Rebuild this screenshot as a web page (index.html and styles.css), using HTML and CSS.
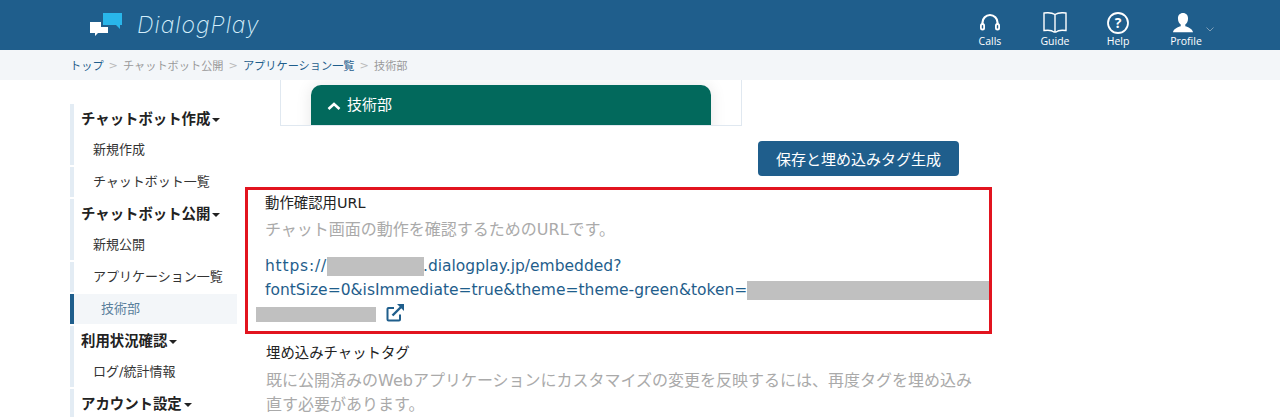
FILE: index.html
```html
<!DOCTYPE html>
<html lang="ja">
<head>
    <meta charset="UTF-8">
    <meta name="viewport" content="width=device-width, initial-scale=1.0">
    <title>DialogPlay</title>
    <link rel="stylesheet" href="styles.css">
</head>
<body>
    <header class="top-bar">
        <a class="logo">
            <svg class="logo-mark" width="32" height="23" viewBox="0 0 32 23">
                <path fill="#29b6ea" d="M13 0h19v12h-2v4l-4-4H13z"/>
                <path fill="#fff" d="M0 9h11v5h7v6H8l-3 3v-3H0z"/>
            </svg>
            <span class="logo-text">DialogPlay</span>
        </a>
        <nav class="top-nav">
            <a class="top-nav-item calls">
                <svg width="24" height="22" viewBox="0 0 24 22" fill="none">
                    <path d="M4.500 14V10.500a7.500 7.500 0 0 1 15 0V14" stroke="#fff" stroke-width="2.200"/>
                    <rect x="2" y="11" width="5" height="7.500" rx="2.500" fill="#fff"/>
                    <rect x="17" y="11" width="5" height="7.500" rx="2.500" fill="#fff"/>
                    <rect x="3.800" y="13" width="1.400" height="3.600" rx="0.700" fill="#1f5e8c"/>
                    <rect x="18.800" y="13" width="1.400" height="3.600" rx="0.700" fill="#1f5e8c"/>
                </svg>
                <span>Calls</span>
            </a>
            <a class="top-nav-item guide">
                <svg width="24" height="22" viewBox="0 0 24 22" fill="none" stroke="#fff" stroke-width="1.400">
                    <path d="M1 1c4-.6 8-.4 11 1.500 3-1.900 7-2.100 11-1.500v17.500c-4-.6-8-.3-10 1.500h-2c-2-1.800-6-2.100-10-1.500z"/>
                    <path d="M12 2.500V20"/>
                </svg>
                <span>Guide</span>
            </a>
            <a class="top-nav-item help">
                <svg width="24" height="22" viewBox="0 0 24 22" fill="none">
                    <circle cx="12" cy="11" r="10" stroke="#fff" stroke-width="1.800"/>
                    <text x="12" y="16" text-anchor="middle" class="help-mark">?</text>
                </svg>
                <span>Help</span>
            </a>
            <a class="top-nav-item profile">
                <svg class="profile-icon" width="22" height="22" viewBox="0 0 24 22">
                    <path fill="#fff" d="M12 0c3.500 0 5.500 2.500 5.500 6 0 3-1.300 5.500-3 6.500v2c3 1 7.500 2.500 8.500 6.500H1c1-4 5.500-5.500 8.500-6.500v-2c-1.700-1-3-3.500-3-6.500 0-3.500 2-6 5.500-6z"/>
                </svg>
                <span>Profile</span>
                <svg class="profile-caret" width="8" height="5" viewBox="0 0 8 5" fill="none">
                    <path d="M.5.500 4 4 7.500.500" stroke="#7f9fb8"/>
                </svg>
            </a>
        </nav>
    </header>

    <div class="breadcrumb">
        <a>トップ</a><i>&gt;</i><span>チャットボット公開</span><i>&gt;</i><a>アプリケーション一覧</a><i>&gt;</i><span>技術部</span>
    </div>

    <div class="main">
        <ul class="side-menu">
            <li class="group"><b>チャットボット作成<em class="caret"></em></b><a>新規作成</a></li>
            <li><a>チャットボット一覧</a></li>
            <li class="group"><b>チャットボット公開<em class="caret"></em></b><a>新規公開</a></li>
            <li><a>アプリケーション一覧</a></li>
            <li class="active"><a>技術部</a></li>
            <li class="group"><b>利用状況確認<em class="caret"></em></b><a>ログ/統計情報</a></li>
            <li><b>アカウント設定<em class="caret"></em></b></li>
        </ul>

        <div class="content">
            <div class="preview">
                <div class="preview-head">
                    <svg width="14" height="9" viewBox="0 0 14 9" fill="none">
                        <path d="M1.500 7 7 2l5.500 5" stroke="#fff" stroke-width="2.600"/>
                    </svg>
                    <span>技術部</span>
                </div>
            </div>
            <div class="actions">
                <button class="save-button">保存と埋め込みタグ生成</button>
            </div>

            <section class="url-box">
                <h4>動作確認用URL</h4>
                <p class="hint">チャット画面の動作を確認するためのURLです。</p>
                <p class="url">
                    <a><span class="scheme">https://</span><span class="mask host"></span>.dialogplay.jp/embedded?<br>fontSize=0&amp;isImmediate=true&amp;theme=theme-green&amp;token=<span class="mask token"></span><br><span class="mask token-end"></span></a>
                    <svg class="open-icon" width="18" height="18" viewBox="0 0 18 18" fill="none">
                        <path d="M14 10.500V15.500a1 1 0 0 1-1 1H2.500a1 1 0 0 1-1-1V5a1 1 0 0 1 1-1H8" stroke="#1f5e8c" stroke-width="2"/>
                        <path d="M6.500 11.500 15.500 2.500" stroke="#1f5e8c" stroke-width="2.400"/>
                        <path fill="#1f5e8c" d="M11 0h7v7z"/>
                    </svg>
                </p>
            </section>

            <section class="tag-box">
                <h4>埋め込みチャットタグ</h4>
                <p class="hint">既に公開済みのWebアプリケーションにカスタマイズの変更を反映するには、再度タグを埋め込み直す必要があります。</p>
            </section>
        </div>
    </div>
</body>
</html>
```

FILE: styles.css
```css
* {
    margin: 0;
    padding: 0;
    box-sizing: border-box;
}

html, body {
    height: 419px;
    overflow: hidden;
}

body {
    font-family: 'DejaVu Sans', 'Noto Sans CJK JP', sans-serif;
    font-size: 14px;
    color: #222;
    background: #fff;
}

.top-bar {
    height: 50px;
    background: #1f5e8c;
    display: flex;
    align-items: center;
    justify-content: space-between;
    padding: 0 62px 0 90px;
}

.logo {
    display: flex;
    align-items: center;
    gap: 15px;
}

.logo-mark {
    margin-top: -2px;
}

.logo-text {
    font-family: 'Inter', sans-serif;
    font-style: italic;
    font-weight: 200;
    font-size: 23px;
    letter-spacing: 1px;
    color: #d4eefb;
}

.top-nav {
    display: flex;
    align-items: flex-start;
}

.top-nav-item {
    display: flex;
    flex-direction: column;
    align-items: center;
    width: 64px;
    color: #fff;
    font-family: 'Open Sans', sans-serif;
    font-size: 10.5px;
    font-weight: 500;
    line-height: 14px;
    padding-top: 9px;
    position: relative;
}

.top-nav-item.calls {
    margin-right: 2px;
}

.top-nav-item.guide {
    width: 62px;
}

.top-nav-item.help {
    margin-right: 4px;
}

.profile-icon {
    margin-right: 6px;
}

.profile-caret {
    position: absolute;
    right: 4px;
    top: 24px;
}

.help-mark {
    font-family: 'Open Sans', sans-serif;
    font-size: 14px;
    font-weight: 700;
    fill: #fff;
}

.breadcrumb {
    height: 30px;
    background: #f3f6f9;
    padding-left: 70px;
    display: flex;
    align-items: center;
    font-size: 11.2px;
    color: #999;
}

.breadcrumb a {
    color: #1f5e8c;
}

.breadcrumb i {
    font-style: normal;
    color: #bbb;
    margin: 0 5px;
}

.main {
    display: flex;
    align-items: flex-start;
    padding-left: 70px;
}

.side-menu {
    list-style: none;
    width: 167px;
    margin-top: 24px;
    flex-shrink: 0;
    display: flex;
    flex-direction: column;
    gap: 2px;
    font-size: 13px;
}

.side-menu li {
    border-left: 4px solid #e3ecf4;
    padding-left: 7px;
    line-height: 30px;
}

.side-menu b {
    display: block;
    font-size: 14.4px;
    font-weight: 700;
    color: #222;
    line-height: 30px;
    height: 28px;
}

.side-menu a {
    display: block;
    height: 30px;
    padding-left: 12px;
    color: #333;
}

.side-menu .group a {
    height: 33px;
    line-height: 35px;
}

.side-menu .active {
    border-left-color: #1f5e8c;
    background: #f3f6f9;
}

.side-menu .active a {
    padding-left: 20px;
    color: #5a7f9c;
}

.caret {
    display: inline-block;
    width: 0;
    height: 0;
    margin-left: 2px;
    vertical-align: 2px;
    border-top: 4px solid #222;
    border-left: 4px solid transparent;
    border-right: 4px solid transparent;
}

.content {
    width: 746px;
    margin-left: 9px;
}

.preview {
    width: 462px;
    height: 46px;
    margin-left: 34px;
    padding: 5px 30px 0;
    border: 1px solid #e0e8f0;
    border-top: 0;
    overflow: hidden;
}

.preview-head {
    width: 400px;
    height: 60px;
    background: #02695c;
    border-radius: 10px 10px 0 0;
    padding-top: 9px;
    display: flex;
    align-items: flex-start;
    gap: 6px;
    padding-left: 16px;
    color: #fff;
    font-size: 15px;
    line-height: 22px;
    box-shadow: 0 0 16px rgba(0, 0, 0, 0.1);
}

.preview-head svg {
    margin-top: 8px;
}

.actions {
    width: 713px;
    margin-top: 15px;
    display: flex;
    justify-content: flex-end;
}

.save-button {
    width: 201px;
    height: 35px;
    background: #1f5e8c;
    border: 0;
    border-radius: 4px;
    color: #fff;
    font-family: inherit;
    font-size: 15px;
}

.url-box {
    width: 747px;
    height: 147px;
    margin: 11px 0 0 -1px;
    border: 3px solid #e2141f;
    padding: 3px 0 0 17px;
}

.url-box h4, .tag-box h4 {
    font-size: 14.4px;
    font-weight: 400;
    line-height: 20px;
    color: #222;
}

.hint {
    font-size: 16px;
    line-height: 24px;
    color: #aaa;
    margin-top: 5px;
}

.url {
    font-size: 15.5px;
    line-height: 24px;
    margin-top: 12px;
    color: #1f5e8c;
}

.scheme {
    letter-spacing: 0.8px;
}

.mask {
    display: inline-block;
    height: 19px;
    background: #c0c0c0;
    vertical-align: -5px;
}

.mask.host {
    width: 97px;
    margin-right: -1px;
}

.mask.token {
    width: 242px;
    margin-right: -8px;
}

.mask.token-end {
    width: 120px;
    height: 15px;
    margin-left: -9px;
    vertical-align: -3px;
}

.open-icon {
    margin-left: 5px;
    vertical-align: -3px;
}

.tag-box {
    padding: 9px 0 0 20px;
}

.tag-box .hint {
    width: 720px;
    margin-top: 6px;
}
```
